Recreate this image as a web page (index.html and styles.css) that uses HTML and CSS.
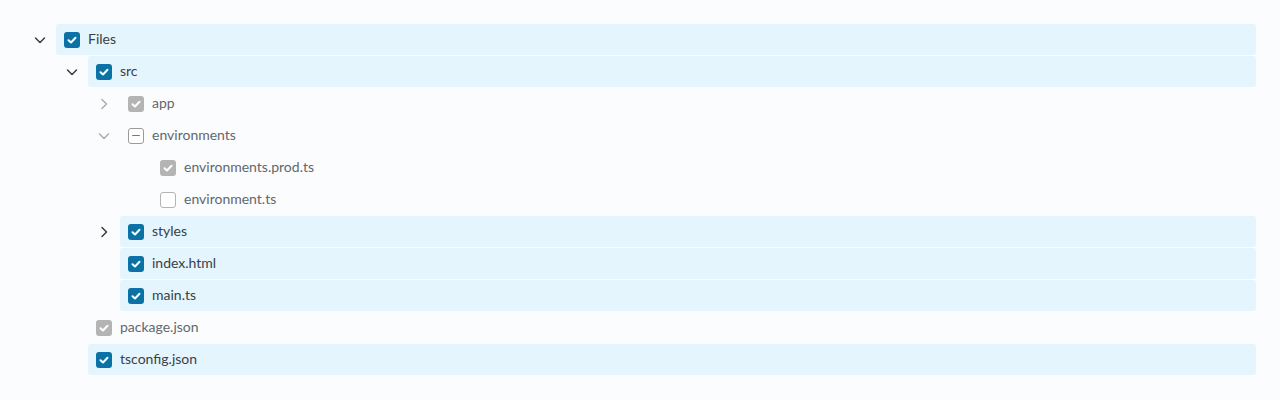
FILE: index.html
```html
<!DOCTYPE html>
<html>
<head>
<meta charset="utf-8">
<link rel="stylesheet" href="styles.css">
</head>
<body>
<div class="tree">
  <div class="row lvl0">
    <span class="caret dark"><svg viewBox="0 0 16 16"><path d="M3.5 6 L8 10.5 L12.5 6"/></svg></span>
    <div class="node sel"><span class="cb on"><svg viewBox="0 0 16 16"><path d="M4.5 8.2 L7 10.5 L11.5 5.8"/></svg></span><span class="lbl">Files</span></div>
  </div>
  <div class="row lvl1">
    <span class="caret dark"><svg viewBox="0 0 16 16"><path d="M3.5 6 L8 10.5 L12.5 6"/></svg></span>
    <div class="node sel"><span class="cb on"><svg viewBox="0 0 16 16"><path d="M4.5 8.2 L7 10.5 L11.5 5.8"/></svg></span><span class="lbl">src</span></div>
  </div>
  <div class="row lvl2">
    <span class="caret light"><svg viewBox="0 0 16 16"><path d="M6 3.5 L10.5 8 L6 12.5"/></svg></span>
    <div class="node"><span class="cb dis"><svg viewBox="0 0 16 16"><path d="M4.5 8.2 L7 10.5 L11.5 5.8"/></svg></span><span class="lbl muted">app</span></div>
  </div>
  <div class="row lvl2">
    <span class="caret light"><svg viewBox="0 0 16 16"><path d="M3.5 6 L8 10.5 L12.5 6"/></svg></span>
    <div class="node"><span class="cb ind"><span class="dash"></span></span><span class="lbl muted">environments</span></div>
  </div>
  <div class="row lvl3">
    <span class="caret"></span>
    <div class="node"><span class="cb dis"><svg viewBox="0 0 16 16"><path d="M4.5 8.2 L7 10.5 L11.5 5.8"/></svg></span><span class="lbl muted">environments.prod.ts</span></div>
  </div>
  <div class="row lvl3">
    <span class="caret"></span>
    <div class="node"><span class="cb off"></span><span class="lbl muted">environment.ts</span></div>
  </div>
  <div class="row lvl2">
    <span class="caret dark"><svg viewBox="0 0 16 16"><path d="M6 3.5 L10.5 8 L6 12.5"/></svg></span>
    <div class="node sel"><span class="cb on"><svg viewBox="0 0 16 16"><path d="M4.5 8.2 L7 10.5 L11.5 5.8"/></svg></span><span class="lbl">styles</span></div>
  </div>
  <div class="row lvl2">
    <span class="caret"></span>
    <div class="node sel"><span class="cb on"><svg viewBox="0 0 16 16"><path d="M4.5 8.2 L7 10.5 L11.5 5.8"/></svg></span><span class="lbl">index.html</span></div>
  </div>
  <div class="row lvl2">
    <span class="caret"></span>
    <div class="node sel"><span class="cb on"><svg viewBox="0 0 16 16"><path d="M4.5 8.2 L7 10.5 L11.5 5.8"/></svg></span><span class="lbl">main.ts</span></div>
  </div>
  <div class="row lvl1">
    <span class="caret"></span>
    <div class="node"><span class="cb dis"><svg viewBox="0 0 16 16"><path d="M4.5 8.2 L7 10.5 L11.5 5.8"/></svg></span><span class="lbl muted">package.json</span></div>
  </div>
  <div class="row lvl1">
    <span class="caret"></span>
    <div class="node sel"><span class="cb on"><svg viewBox="0 0 16 16"><path d="M4.5 8.2 L7 10.5 L11.5 5.8"/></svg></span><span class="lbl">tsconfig.json</span></div>
  </div>
</div>
</body>
</html>
```

FILE: styles.css
```css
html, body {
  margin: 0;
  padding: 0;
  background: #fbfcfd;
}
body {
  font-family: "Lato", "Liberation Sans", sans-serif;
  font-size: 14px;
  color: #3a4046;
}
.tree {
  padding: 24px 24px 0 24px;
  display: flex;
  flex-direction: column;
}
.row {
  display: flex;
  align-items: stretch;
  height: 32px;
}
.lvl0 { padding-left: 0; }
.lvl1 { padding-left: 32px; }
.lvl2 { padding-left: 64px; }
.lvl3 { padding-left: 96px; }
.caret {
  width: 32px;
  flex: 0 0 32px;
  display: flex;
  align-items: center;
  justify-content: center;
  height: 31px;
}
.caret svg {
  width: 16px;
  height: 16px;
  fill: none;
  stroke-width: 1.5;
  stroke-linecap: round;
  stroke-linejoin: round;
}
.caret.dark svg { stroke: #3c3c3c; }
.caret.light svg { stroke: #adadad; }
.node {
  flex: 1;
  display: flex;
  align-items: center;
  height: 31px;
  padding-left: 8px;
  border-radius: 3px;
  margin-bottom: 1px;
}
.node.sel { background: #e4f5fe; }
.cb {
  width: 16px;
  height: 16px;
  box-sizing: border-box;
  border-radius: 3px;
  display: flex;
  align-items: center;
  justify-content: center;
  margin-right: 8px;
  flex: 0 0 16px;
}
.cb svg {
  width: 16px;
  height: 16px;
  fill: none;
  stroke: #fff;
  stroke-width: 2;
  stroke-linecap: round;
  stroke-linejoin: round;
}
.cb.on { background: #0a72a4; }
.cb.dis { background: #b4b4b4; }
.cb.off { background: #fff; border: 1px solid #b4b4b4; }
.cb.ind { background: #fff; border: 1px solid #9a9a9a; }
.cb .dash {
  width: 8px;
  height: 1.5px;
  background: #7a7a7a;
  border-radius: 1px;
}
.lbl {
  line-height: 16px;
  margin-top: -2px;
}
.lbl.muted { color: #61686e; }
```
